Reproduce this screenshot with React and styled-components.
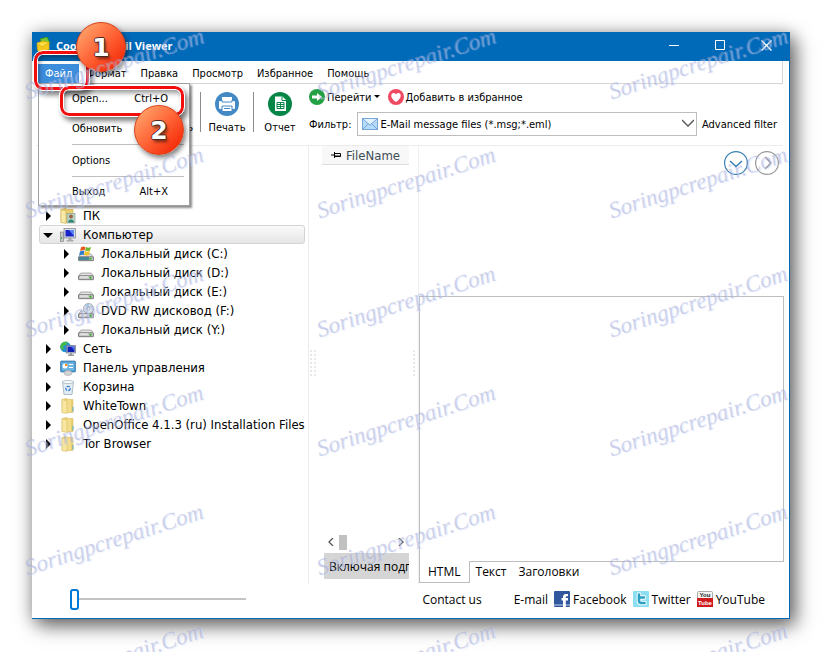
import React from 'react'
import styled, { createGlobalStyle } from 'styled-components'

const GlobalStyle = createGlobalStyle`
  * {
    box-sizing: border-box;
  }
  body {
    margin: 0;
    background: #fff;
    color: #000;
    font-family: "DejaVu Sans Condensed", "DejaVu Sans", sans-serif;
    font-size: 11px;
  }
  button, select {
    font: inherit;
    color: inherit;
    background: none;
    border: 0;
    padding: 0;
    margin: 0;
  }
  svg {
    display: block;
    flex: none;
  }
`

const treeItems = [
  { name: 'ПК', icon: 'user' },
  { name: 'Компьютер', icon: 'computer', open: true },
  { name: 'Локальный диск (C:)', icon: 'system', level: 1 },
  { name: 'Локальный диск (D:)', icon: 'drive', level: 1 },
  { name: 'Локальный диск (E:)', icon: 'drive', level: 1 },
  { name: 'DVD RW дисковод (F:)', icon: 'dvd', level: 1 },
  { name: 'Локальный диск (Y:)', icon: 'drive', level: 1 },
  { name: 'Сеть', icon: 'network' },
  { name: 'Панель управления', icon: 'panel' },
  { name: 'Корзина', icon: 'bin' },
  { name: 'WhiteTown', icon: 'folder' },
  { name: 'OpenOffice 4.1.3 (ru) Installation Files', icon: 'folder' },
  { name: 'Tor Browser', icon: 'folder' },
]

const menuItems = ['Формат', 'Правка', 'Просмотр', 'Избранное', 'Помощь']

const Page = styled.div`
  position: relative;
  display: flex;
  min-height: 100vh;
  padding: 32px 33px 33px 32px;
  overflow: hidden;
`

const Window = styled.main`
  position: relative;
  flex: 1;
  min-width: 0;
  display: flex;
  flex-direction: column;
  background: #fff;
  border-right: 1px solid #0069b8;
  border-bottom: 1px solid #0069b8;
  box-shadow: 6px 7px 18px rgba(0, 0, 0, 0.5), 0 2px 16px rgba(0, 0, 0, 0.3);
`

const TitleBar = styled.header`
  display: flex;
  align-items: center;
  gap: 4px;
  height: 29px;
  padding: 0 11px 3px 4px;
  background: #0069b8;
  color: #fff;
`

const Title = styled.h1`
  flex: 1;
  margin: 0;
  font-family: "Open Sans", sans-serif;
  font-size: 11px;
  font-weight: bold;
`

const WindowButton = styled.button`
  display: flex;
  align-items: center;
  justify-content: center;
  width: 24px;
  height: 24px;
  margin-left: 18px;
`

const MenuBar = styled.nav`
  display: flex;
  height: 23px;
  margin: 0 6px 0 4px;
  padding: 3px 2px 0;
  border-right: 1px solid #d5d5d5;
  border-bottom: 1px solid #d5d5d5;
`

const MenuTab = styled.button`
  padding: 0 7px;
  background: ${p => (p.$active ? '#3c8ddc' : 'transparent')};
  color: ${p => (p.$active ? '#fff' : '#000')};
`

const DropMenu = styled.div`
  position: absolute;
  top: 51px;
  left: 6px;
  z-index: 2;
  width: 152px;
  padding: 0 5px 0 33px;
  background: #fff;
  border: 1px solid #a0a0a0;
  box-shadow: 2px 2px 2px rgba(0, 0, 0, 0.45);
`

const DropItem = styled.button`
  display: flex;
  align-items: center;
  justify-content: space-between;
  width: 100%;
  height: ${p => (p.$edge ? 28 : 31)}px;
  padding-right: 16px;
`

const Separator = styled.hr`
  margin: 0;
  border: 0;
  border-top: 1px solid #c0c0c0;
`

const ToolBar = styled.div`
  display: flex;
  height: 62px;
  margin: 0 6px 0 4px;
  border-bottom: 1px solid #ececec;
`

const ToolGroup = styled.div`
  display: flex;
  align-items: flex-start;
  width: 273px;
  padding: 8px 3px 0 0;
  justify-content: flex-end;
`

const ToolButton = styled.button`
  display: flex;
  flex-direction: column;
  align-items: center;
  gap: 5px;
  min-width: 52px;
  padding: 0 ${p => (p.$wide ? 7 : 0)}px;
`

const ToolLine = styled.span`
  width: 1px;
  height: 40px;
  background: #8c8c8c;
`

const ToolRows = styled.div`
  flex: 1;
  min-width: 0;
  display: flex;
  flex-direction: column;
  padding: 4px 6px 0 0;
`

const ToolRow = styled.div`
  display: flex;
  align-items: center;
  gap: ${p => p.$gap}px;
  height: ${p => p.$height}px;
`

const LinkButton = styled.button`
  display: flex;
  align-items: center;
  gap: 2px;
`

const SelectBox = styled.div`
  position: relative;
  flex: 1;
  height: 24px;

  select {
    width: 100%;
    height: 100%;
    padding: 0 20px 0 23px;
    appearance: none;
    border: 1px solid #bdbdbd;
  }
  svg {
    position: absolute;
    top: 5px;
    left: 5px;
    pointer-events: none;
  }
  svg + svg {
    left: auto;
    right: 3px;
  }
`

const Body = styled.div`
  flex: 1;
  display: grid;
  grid-template-columns: 277px 110px 1fr;
  margin-right: 5px;
`

const Tree = styled.ul`
  list-style: none;
  margin: 0;
  padding: 60px 3px 0 7px;
  border-right: 1px solid #ededed;
  font-size: 13px;
`

const TreeRow = styled.li`
  display: flex;
  align-items: center;
  gap: 7px;
  height: 19px;
  padding-left: ${p => (p.$level ? 21 : 3)}px;
  white-space: nowrap;
  border: 1px solid ${p => (p.$selected ? '#d4d4d4' : 'transparent')};
  border-radius: 3px;
  background: ${p => (p.$selected ? 'linear-gradient(#fafafa, #e6e6e6)' : 'none')};
`

const ListPane = styled.section`
  position: relative;
  display: flex;
  flex-direction: column;
  padding: 0 9px 5px 13px;
  border-right: 1px solid #f0f0f0;
`

const ListHeader = styled.button`
  display: flex;
  align-items: center;
  gap: 5px;
  height: 19px;
  padding-left: 9px;
  background: #f8f8f8;
  border-bottom: 1px solid #dedede;
  color: #404c55;
  font-size: 13px;
`

const ListSpace = styled.div`
  flex: 1;
`

const ScrollRow = styled.div`
  display: flex;
  align-items: center;
  gap: 4px;
  height: 16px;
  margin-bottom: 3px;
  padding: 0 4px 0 5px;
`

const Thumb = styled.span`
  width: 8px;
  height: 15px;
  margin-right: auto;
  background: #c1c1c1;
`

const SubButton = styled.button`
  height: 26px;
  margin-left: 2px;
  padding-left: 5px;
  overflow: hidden;
  background: #d5d5d5;
  font-family: "Open Sans", sans-serif;
  font-size: 12px;
  text-align: left;
  white-space: nowrap;
`

const Grip = styled.svg`
  position: absolute;
  top: 204px;
  ${p => p.$side}: 1px;
`

const Preview = styled.section`
  display: flex;
  flex-direction: column;
`

const PreviewHead = styled.div`
  display: flex;
  justify-content: flex-end;
  gap: 7px;
  height: 150px;
  padding: 5px 5px 0;
`

const PreviewBox = styled.div`
  flex: 1;
  border: 1px solid #bdbdbd;
`

const Tabs = styled.div`
  display: flex;
  align-items: flex-start;
  height: 22px;
  font-family: "Open Sans", sans-serif;
  font-size: 12px;
`

const Tab = styled.button`
  height: ${p => (p.$active ? 22 : 18)}px;
  margin-top: ${p => (p.$active ? -1 : 0)}px;
  padding: 0 ${p => (p.$active ? 8 : 6)}px;
  background: #fff;
  border: ${p => (p.$active ? '1px solid #bdbdbd' : '0')};
  border-top: 0;
`

const Footer = styled.footer`
  display: flex;
  align-items: center;
  height: 34px;
  padding: 0 24px 4px 38px;
  font-family: "Open Sans", sans-serif;
  font-size: 12px;
`

const Slider = styled.input`
  width: 176px;
  height: 22px;
  margin: 0 auto 0 0;
  appearance: none;
  background: linear-gradient(#c4c4c4, #c4c4c4) center / 100% 2px no-repeat;

  &::-webkit-slider-thumb {
    appearance: none;
    width: 9px;
    height: 21px;
    background: #fff;
    border: 2px solid #0078d7;
    border-radius: 3px;
  }
`

const Links = styled.div`
  display: flex;
  align-items: center;
  gap: 6px;
`

const FooterLink = styled.a`
  display: flex;
  align-items: center;
  gap: 3px;
  color: #000;
  text-decoration: none;
  margin-right: ${p => (p.$wide ? 26 : 0)}px;
`

const Frame = styled.div`
  position: absolute;
  z-index: 3;
  top: ${p => p.$top}px;
  left: ${p => p.$left}px;
  width: ${p => p.$width}px;
  height: ${p => p.$height}px;
  border: 3px solid #f40d0d;
  border-radius: 9px;
  outline: 1px solid #fff;
  box-shadow: inset 0 0 0 1px #fff, inset 2px 4px 5px rgba(0, 0, 0, 0.4), 3px 4px 5px 1px rgba(0, 0, 0, 0.5);
  pointer-events: none;
`

const Badge = styled.div`
  position: absolute;
  z-index: 4;
  top: ${p => p.$top}px;
  left: ${p => p.$left}px;
  display: flex;
  align-items: center;
  justify-content: center;
  width: 50px;
  height: 50px;
  border: 1px solid #d8421b;
  border-radius: 50%;
  background: linear-gradient(135deg, #ff9a63 15%, #ff6336 50%, #f5300c 85%);
  box-shadow: 2px 3px 5px rgba(0, 0, 0, 0.5);
  color: #fff;
  font-family: "DejaVu Sans", sans-serif;
  font-size: 25px;
  font-weight: bold;
  text-shadow: 1px 0 #4a2a20, -1px 0 #4a2a20, 0 1px #4a2a20, 0 -1px #4a2a20, 2px 3px 3px rgba(0, 0, 0, 0.5);
`

const Marks = styled.div`
  position: absolute;
  z-index: 5;
  top: 49px;
  left: 18px;
  display: grid;
  grid-template-columns: repeat(3, 292px);
  grid-auto-rows: 119px;
  pointer-events: none;
`

const Mark = styled.span`
  width: 192px;
  height: 30px;
  transform: rotate(-18deg);
  color: rgba(150, 152, 200, 0.4);
  font-family: "Liberation Serif", serif;
  font-size: 23px;
  font-style: italic;
  line-height: 30px;
  text-align: center;
  text-shadow: 1px 1px 1px rgba(205, 222, 255, 0.5);
`

const Drive = () => (
  <>
    <path d="M3 8h10l2.500 3v3.500h-15v-3.500z" fill="#e2e2e2" stroke="#8b8b8b" strokeWidth=".7" />
    <rect x=".6" y="10.700" width="14.800" height="4" rx="1" fill="#c9c9c9" stroke="#696969" strokeWidth=".8" />
    <rect x="2" y="11.500" width="8" height="1" fill="#f6f6f6" />
    <rect x="11.500" y="11.700" width="2" height="2" fill="#2bb11c" />
  </>
)

const shapes = {
  folder: (
    <>
      <path d="M2 1.500l5-1 1 1h5v13H2z" fill="#e9cf70" stroke="#dcc069" strokeWidth=".6" />
      <path d="M2 1.500l5 1.500v12.500l-5-1z" fill="#f6e6a0" stroke="#dcc069" strokeWidth=".6" />
      <path d="M7.500 2h3.500v12H7.500z" fill="#f3dc8a" />
      <path d="M12.500 8.500l1 1v4h-1z" fill="#51a9d8" />
    </>
  ),
  user: (
    <>
      <path d="M1 1.500l5-1 1 1h6v13H1z" fill="#e9cf70" stroke="#c9a53c" strokeWidth=".6" />
      <path d="M1 1.500l5 1.500v12.500l-5-1z" fill="#f8e9a8" stroke="#cfae4e" strokeWidth=".6" />
      <rect x="7" y="5.500" width="8" height="9.500" fill="#b9d4c4" stroke="#8c9b8c" strokeWidth=".6" />
      <circle cx="11" cy="8.500" r="2" fill="#9b6547" />
      <path d="M8 14.500c0-4 6-4 6 0z" fill="#2e8276" />
    </>
  ),
  computer: (
    <>
      <rect x=".5" y="5" width="3" height="9.500" fill="#c7c7c7" stroke="#777" strokeWidth=".6" />
      <rect x="1" y="10" width="1" height="2" fill="#3cb44a" />
      <rect x="4" y="1.500" width="11.500" height="9.500" fill="#d9dce4" stroke="#7d828d" strokeWidth=".7" />
      <path d="M5.500 3h8.500v6.500H5.500z" fill="#1824c8" />
      <path d="M9 3h5v6z" fill="#5b86f5" />
      <path d="M8.500 11h3v2h2v1.500h-7V13h2z" fill="#aaa" />
    </>
  ),
  drive: <Drive />,
  system: (
    <>
      <Drive />
      <rect x="1" y="11" width="10" height="3" fill="#47869b" />
      <path d="M3 1.500c2-1.500 3-1 4.500-.5l-1 3.500C5 4 4 4 2 5z" fill="#e85a24" />
      <path d="M8 1c2 1 3 .7 5 0l-1 3.500c-2 .8-3 .5-5 0z" fill="#6fb62c" />
      <path d="M2 5.500c2-1 3-1 4.500-.5l-1 4c-2-.6-3-.5-4.500.5z" fill="#2e7cc9" />
      <path d="M7 5c2 1 3 .8 5 0l-1 4c-2 .8-3.500.5-5 0z" fill="#f5c225" />
    </>
  ),
  dvd: (
    <>
      <Drive />
      <circle cx="10.500" cy="5.500" r="5" fill="#dbe4ed" stroke="#8f9aa6" strokeWidth=".8" />
      <path d="M10.500 5.500L7 2a5 5 0 0 1 4-1z" fill="#a5c6df" />
      <circle cx="10.500" cy="5.500" r="1.500" fill="#fff" stroke="#808890" strokeWidth=".7" />
    </>
  ),
  network: (
    <>
      <circle cx="5.500" cy="6" r="5.300" fill="#2690cf" />
      <path d="M1 3c2-3 6-3 7-2L6 4 3 5l1 3-2 1C0 7 0 5 1 3z" fill="#45b94c" />
      <rect x="6.500" y="4.500" width="9" height="7.500" fill="#c5cad6" stroke="#666f86" strokeWidth=".7" />
      <rect x="7.500" y="5.500" width="7" height="5.500" fill="#141fb4" />
      <path d="M11 5.500h3.500v4z" fill="#4b75eb" />
      <path d="M10 12h2v1.500h2V15H8v-1.500h2z" fill="#9a9a9a" />
    </>
  ),
  panel: (
    <>
      <rect x=".5" y="1" width="15" height="11" rx="1" fill="#4d9bd5" stroke="#34729f" strokeWidth=".7" />
      <rect x="2" y="2.500" width="12" height="8" fill="#6fb5e2" />
      <circle cx="5" cy="6" r="2.500" fill="#fff" />
      <path d="M5 6V3.500A2.500 2.500 0 0 1 7.500 6z" fill="#f19329" />
      <path d="M9 4.500h4M9 7.500h4" stroke="#fff" />
      <ellipse cx="8" cy="13" rx="4" ry="2.500" fill="#d4d4d4" stroke="#999" strokeWidth=".5" />
    </>
  ),
  bin: (
    <>
      <path d="M2.500 3h11L12 15.500H4z" fill="#e3edf4" stroke="#8fa3b1" strokeWidth=".7" />
      <ellipse cx="8" cy="3" rx="5.500" ry="1.500" fill="#fff" stroke="#97a9b5" strokeWidth=".7" />
      <circle cx="8" cy="9.500" r="2.200" fill="none" stroke="#3d80d2" strokeWidth="1.300" strokeDasharray="3 1" />
    </>
  ),
}

const Icon = ({ name }) => (
  <svg width="16" height="16" viewBox="0 0 16 16" aria-hidden="true">{shapes[name]}</svg>
)

const Arrow = ({ open }) => (
  <svg width="10" height="10" viewBox="0 0 10 10" aria-hidden="true">
    <path d={open ? 'M0 3h10L5 8z' : 'M3 0l5 5-5 5z'} fill="#000" />
  </svg>
)

const Chevron = ({ d, size = 12 }) => (
  <svg width={size} height={size} viewBox={`0 0 ${size} ${size}`} fill="none" stroke="#555" strokeWidth="1.300" aria-hidden="true">
    <path d={d} />
  </svg>
)

const Round = styled.button`
  width: 24px;
  height: 24px;
`

const RoundButton = ({ label, color, d }) => (
  <Round aria-label={label}>
    <svg width="24" height="24" viewBox="0 0 24 24" fill="none" stroke={color} strokeWidth="1.200">
      <circle cx="12" cy="12" r="11.400" />
      <path d={d} strokeWidth="1.500" />
    </svg>
  </Round>
)

const GripDots = ({ side, columns }) => (
  <Grip $side={side} width={columns * 4} height="26" aria-hidden="true">
    {Array.from({ length: columns * 7 }, (_, i) => (
      <rect key={i} x={(i % columns) * 4} y={Math.floor(i / columns) * 4} width="2" height="2" fill="#e8e8e8" />
    ))}
  </Grip>
)

const TopBar = () => (
  <TitleBar>
    <svg width="16" height="16" viewBox="0 0 16 16" aria-hidden="true">
      <path d="M4 2l7-2 3 6-7 3z" fill="#75c832" stroke="#3c8b1d" strokeWidth=".7" />
      <path d="M1 6l6-2 6 1.500V13L4 15.500 1.500 13z" fill="#f5c91c" stroke="#d9a811" strokeWidth=".7" />
      <path d="M1 6l5 4 7-4.500" fill="#fbe04a" stroke="#d9a811" strokeWidth=".7" />
    </svg>
    <Title>CoolUtils Mail Viewer</Title>
    <WindowButton aria-label="Minimize">
      <svg width="11" height="11" stroke="#fff"><path d="M0 5.500h10" /></svg>
    </WindowButton>
    <WindowButton aria-label="Maximize">
      <svg width="11" height="11" stroke="#fff" fill="none"><path d="M.5 .5h9v9h-9z" /></svg>
    </WindowButton>
    <WindowButton aria-label="Close">
      <svg width="11" height="11" stroke="#fff" strokeWidth="1.300"><path d="M.5 .5l10 10M10.500 .5l-10 10" /></svg>
    </WindowButton>
  </TitleBar>
)

const FileMenu = () => (
  <DropMenu>
    <DropItem $edge><span>Open...</span><span>Ctrl+O</span></DropItem>
    <Separator />
    <DropItem><span>Обновить</span></DropItem>
    <Separator />
    <DropItem><span>Options</span></DropItem>
    <Separator />
    <DropItem $edge><span>Выход</span><span>Alt+X</span></DropItem>
  </DropMenu>
)

const Tools = () => (
  <ToolBar>
    <ToolGroup>
      <ToolButton $wide>
        <svg width="24" height="24" viewBox="0 0 24 24">
          <circle cx="12" cy="12" r="12" fill="#438ac5" />
        </svg>
        Обновить
      </ToolButton>
      <ToolLine />
      <ToolButton>
        <svg width="24" height="24" viewBox="0 0 24 24">
          <circle cx="12" cy="12" r="12" fill="#438ac5" />
          <path d="M7 5h10v5H7z" fill="#fff" />
          <rect x="4" y="9" width="16" height="8" rx="1" fill="#fff" />
          <path d="M7 8v2h10V8" fill="none" stroke="#438ac5" />
          <path d="M7 14h10v5.500H7z" fill="#fff" stroke="#438ac5" />
          <path d="M9 16.500h6" stroke="#438ac5" />
        </svg>
        Печать
      </ToolButton>
      <ToolLine />
      <ToolButton>
        <svg width="24" height="24" viewBox="0 0 24 24">
          <circle cx="12" cy="12" r="12" fill="#058646" />
          <path d="M7 4.500h7.500L18 8v11H7z" fill="#fff" />
          <path d="M14 4.500V8.500h4" fill="none" stroke="#058646" />
          <path d="M9 10.500h7v6H9zM9 12.500h7M9 14.500h7M12.500 10.500v6" fill="none" stroke="#058646" />
        </svg>
        Отчет
      </ToolButton>
    </ToolGroup>
    <ToolRows>
      <ToolRow $gap={8} $height={18}>
        <LinkButton>
          <svg width="16" height="16" viewBox="0 0 16 16">
            <circle cx="8" cy="8" r="8" fill="#24a044" />
            <path d="M3 6.500h5V4l5 4-5 4V9.500H3z" fill="#fff" />
          </svg>
          Перейти
          <svg width="6" height="4"><path d="M0 0h6L3 3z" /></svg>
        </LinkButton>
        <LinkButton>
          <svg width="16" height="16" viewBox="0 0 16 16">
            <circle cx="8" cy="8" r="8" fill="#f04a62" />
            <path d="M8 13C1 8.500 3 3.500 6 4c1 .1 1.600.7 2 1.400C8.400 4.700 9 4.100 10 4c3-.5 5 4.500-2 9z" fill="#fff" />
          </svg>
          Добавить в избранное
        </LinkButton>
      </ToolRow>
      <ToolRow $gap={5} $height={36}>
        <label htmlFor="filter">Фильтр:</label>
        <SelectBox>
          <select id="filter">
            <option>E-Mail message files (*.msg;*.eml)</option>
          </select>
          <svg width="16" height="14" viewBox="0 0 16 14">
            <rect x=".5" y="1.500" width="15" height="11" fill="#b6dafa" stroke="#75a8d7" />
            <path d="M1 2l7 6 7-6M1 12l5-5M15 12l-5-5" fill="#e4f2fd" stroke="#6099cf" strokeWidth=".8" />
          </svg>
          <Chevron d="M0 3l6 6 6-6" />
        </SelectBox>
        <button>Advanced filter</button>
      </ToolRow>
    </ToolRows>
  </ToolBar>
)

const FileList = () => (
  <ListPane>
    <GripDots side="left" columns={2} />
    <GripDots side="right" columns={1} />
    <ListHeader>
      <svg width="10" height="8" viewBox="0 0 10 8" fill="none" stroke="#000">
        <path d="M0 4h4M3.500 1v6M4 2.500h5.500v3H4M4 5h6" />
      </svg>
      FileName
    </ListHeader>
    <ListSpace />
    <ScrollRow>
      <Chevron size={8} d="M6 0L2 4l4 4" />
      <Thumb />
      <Chevron size={8} d="M2 0l4 4-4 4" />
    </ScrollRow>
    <SubButton>Включая подпапки</SubButton>
  </ListPane>
)

const BottomBar = () => (
  <Footer>
    <Slider type="range" min="0" max="10" defaultValue="0" aria-label="Zoom" />
    <Links>
      <FooterLink href="#contact" $wide>Contact us</FooterLink>
      <FooterLink href="#email">E-mail</FooterLink>
      <FooterLink href="#facebook">
        <svg width="16" height="16" viewBox="0 0 16 16">
          <rect width="16" height="16" rx="1" fill="#31579d" />
          <path d="M0 13h16v2H0z" fill="#7a96c7" />
          <path d="M14 3h-1.500C9.500 3 9 4.500 9 6v1H7.500v2.500H9V16h2.800V9.500H14V7h-2.200V6c0-.6.300-.8 1-.8H14z" fill="#fff" />
        </svg>
        Facebook
      </FooterLink>
      <FooterLink href="#twitter">
        <svg width="16" height="16" viewBox="0 0 16 16">
          <rect width="16" height="16" rx="1" fill="#8cdff0" />
          <path d="M6 3.500v6C6 11.500 7 12 8 12h3.500M6 6.500h5" fill="none" stroke="#fff" strokeWidth="4.500" strokeLinecap="round" />
          <path d="M6 3.500v6C6 11.500 7 12 8 12h3.500M6 6.500h5" fill="none" stroke="#2c9fc4" strokeWidth="2.600" strokeLinecap="round" />
        </svg>
        Twitter
      </FooterLink>
      <FooterLink href="#youtube">
        <svg width="16" height="16" viewBox="0 0 16 16" fontFamily="Liberation Sans, sans-serif" fontWeight="bold" fontSize="6" textAnchor="middle" aria-hidden="true">
          <rect x=".5" y=".5" width="15" height="15" rx="1" fill="#f4f4f4" stroke="#aaa" />
          <path d="M0 7h16v9H0z" fill="#cf1b1b" />
          <text x="8" y="6" fill="#222">You</text>
          <text x="8" y="14" fill="#fff">Tube</text>
        </svg>
        YouTube
      </FooterLink>
    </Links>
  </Footer>
)

const App = () => {
  return (
    <Page>
      <GlobalStyle />
      <Window>
        <TopBar />
        <MenuBar>
          <MenuTab $active>Файл</MenuTab>
          {menuItems.map(item => <MenuTab key={item}>{item}</MenuTab>)}
        </MenuBar>
        <FileMenu />
        <Tools />
        <Body>
          <Tree>
            {treeItems.map(item => (
              <TreeRow key={item.name} $level={item.level} $selected={item.open}>
                <Arrow open={item.open} />
                <Icon name={item.icon} />
                {item.name}
              </TreeRow>
            ))}
          </Tree>
          <FileList />
          <Preview>
            <PreviewHead>
              <RoundButton label="Expand" color="#3b7fb2" d="M6 10l6 5.500 6-5.500" />
              <RoundButton label="Next" color="#999" d="M10 6l6 6-6 6" />
            </PreviewHead>
            <PreviewBox />
            <Tabs>
              <Tab $active>HTML</Tab>
              <Tab>Текст</Tab>
              <Tab>Заголовки</Tab>
            </Tabs>
          </Preview>
        </Body>
        <BottomBar />
      </Window>
      <Frame $top={51} $left={34} $width={55} $height={39} />
      <Frame $top={86} $left={60} $width={124} $height={30} />
      <Badge $top={22} $left={76}>1</Badge>
      <Badge $top={105} $left={134}>2</Badge>
      <Marks aria-hidden="true">
        {Array.from({ length: 18 }, (_, i) => <Mark key={i}>Soringpcrepair.Com</Mark>)}
      </Marks>
    </Page>
  )
}

export default App
